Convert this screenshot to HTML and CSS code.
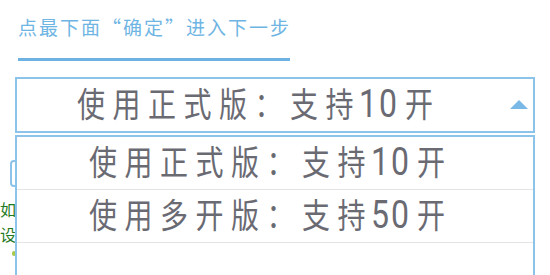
FILE: index.html
```html
<!DOCTYPE html>
<html lang="zh-CN">
<head>
<meta charset="utf-8">
<title>选择版本</title>
<link rel="stylesheet" href="styles.css">
</head>
<body>
<div class="page">
  <div class="hint">点最下面“确定”进入下一步</div>
  <div class="rule"></div>
  <div class="picker">
    <div class="select">
      <span class="select-text"><span class="stretch">使用正式版：支持<span class="num">10</span>开</span></span>
      <svg class="arrow" width="18" height="9" viewBox="0 0 18 9"><polygon points="0,9 9,0 18,9" fill="#7ab8e6"/></svg>
    </div>
    <ul class="dropdown">
      <li class="option"><span class="stretch">使用正式版：支持<span class="num">10</span>开</span></li>
      <li class="option"><span class="stretch">使用多开版：支持<span class="num">50</span>开</span></li>
      <li class="option empty"></li>
    </ul>
  </div>
  <div class="behind">
    <div class="check-btn"></div>
    <div class="note">如<br>设</div>
    <div class="dot"></div>
  </div>
</div>
</body>
</html>
```
FILE: styles.css
```css
html, body {
  margin: 0;
  padding: 0;
  background: #ffffff;
}
.page {
  width: 550px;
  height: 275px;
  overflow: hidden;
  font-family: "Noto Sans CJK SC", sans-serif;
}
.hint {
  padding: 13px 0 0 18px;
  font-size: 19px;
  line-height: 27px;
  letter-spacing: 2px;
  color: #6fb5e3;
  white-space: nowrap;
}
.rule {
  margin: 18px 0 0 18px;
  width: 272px;
  height: 3px;
  background: #6db2e2;
}
.picker {
  position: relative;
  margin: 16px 0 0 15px;
  width: 520px;
}
.select {
  box-sizing: border-box;
  height: 56px;
  border: 2px solid #8cc3ea;
  display: flex;
  align-items: center;
  justify-content: space-between;
  padding: 0 5px 0 60px;
}
.stretch {
  display: inline-block;
  font-family: Roboto, "Noto Sans CJK SC", sans-serif;
  font-size: 28px;
  line-height: 32px;
  letter-spacing: 7.5px;
  color: #6a6a73;
  transform: scaleY(1.22);
  white-space: nowrap;
}
.num {
  display: inline-block;
  font-size: 32px;
  letter-spacing: 2px;
  margin: 0 6px 0 -2px;
}
.arrow {
  display: block;
  margin-bottom: 2px;
}
.dropdown {
  position: absolute;
  left: 0;
  top: 58px;
  width: 520px;
  height: 200px;
  box-sizing: border-box;
  margin: 0;
  padding: 0;
  list-style: none;
  border: 2px solid #8cc3ea;
  background: #ffffff;
  z-index: 2;
}
.option {
  height: 52px;
  border-bottom: 1px solid #e4e4e4;
  display: flex;
  align-items: center;
  padding-left: 72px;
}
.option.empty {
  border-bottom: none;
}
.behind {
  margin-top: 27px;
}
.check-btn {
  box-sizing: border-box;
  margin-left: 10px;
  width: 40px;
  height: 27px;
  border: 2px solid #8cc3ea;
  border-radius: 4px;
}
.note {
  margin-top: 10px;
  font-size: 16px;
  line-height: 25px;
  color: #1f7a1f;
  white-space: nowrap;
}
.dot {
  margin: 4px 0 0 12px;
  width: 4px;
  height: 5px;
  border-radius: 2px;
  background: #a9c94c;
}
```
